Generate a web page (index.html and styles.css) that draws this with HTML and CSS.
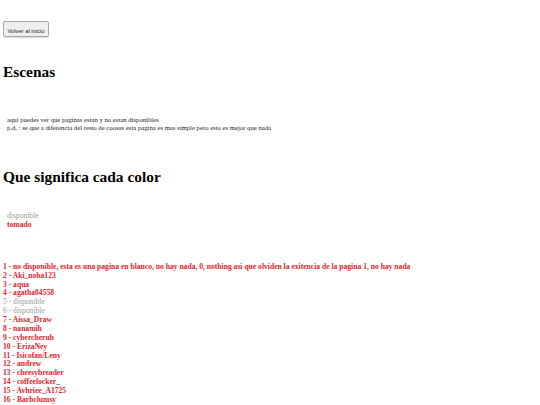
FILE: index.html
```html
<!DOCTYPE html>
<html lang="es">

<head>
    <meta charset="UTF-8">
    <meta name="viewport" content="width=device-width, initial-scale=1.0">
    <title>Escenas</title>

    <link rel="stylesheet" href="styles.css">
</head>

<body>

    <button class="volver">Volver al inicio</button>

    <h1>Escenas</h1>

    <p class="intro">
        aqui puedes ver que paginas estan y no estan disponibles<br>
        p.d. : se que a diferencia del resto de coosas esta pagina es mas simple pero esto es mejor que nada
    </p>

    <h1>Que significa cada color</h1>

    <div class="leyenda">
        <span class="libre">disponible</span><br>
        <span class="tomado">tomado</span>
    </div>

    <ul class="paginas">
        <li class="tomado">1 - no disponible, esta es una pagina en blanco, no hay nada, 0, nothing asi que olviden la exitencia de la pagina 1, no hay nada</li>
        <li class="tomado">2 - Aki_noha123</li>
        <li class="tomado">3 - aqua</li>
        <li class="tomado">4 - agatha04558</li>
        <li class="libre">5 - disponible</li>
        <li class="libre">6 - disponible</li>
        <li class="tomado">7 - Aissa_Draw</li>
        <li class="tomado">8 - nanamih</li>
        <li class="tomado">9 - cybercherub</li>
        <li class="tomado">10 - ErizaNey</li>
        <li class="tomado">11 - Isicofan/Leny</li>
        <li class="tomado">12 - andrew</li>
        <li class="tomado">13 - cheesybreader</li>
        <li class="tomado">14 - coffeelocker_</li>
        <li class="tomado">15 - Avhriee_A1725</li>
        <li class="tomado">16 - Barbclumsy</li>
    </ul>

</body>

</html>
```

FILE: styles.css
```css
body {
    margin: 0;
    padding: 21px 3px;
    font-family: "Liberation Serif", serif;
    font-size: 7.6px;
    line-height: 8.87px;
    color: #000;
}

.volver {
    width: 46px;
    height: 16px;
    padding: 0;
    font-family: "Liberation Sans", sans-serif;
    font-size: 5.8px;
    padding-top: 4px;
    color: #222;
    background: #efefef;
    border: 1px solid #a9a9a9;
    border-radius: 2px;
    box-shadow: 0 1px 1px rgba(0, 0, 0, .15);
}

h1 {
    font-size: 15.4px;
    line-height: 18px;
    margin: 26px 0;
}

.intro {
    margin: 0 0 36px 4px;
    padding-top: 9px;
    font-size: 6.7px;
    line-height: 8px;
    color: #222;
}

.leyenda {
    margin-left: 4px;
}

.libre {
    color: #999;
}

.tomado {
    color: #e3232d;
    font-weight: bold;
}

.paginas {
    list-style: none;
    padding: 0;
    margin: 33px 0 0;
}
```
